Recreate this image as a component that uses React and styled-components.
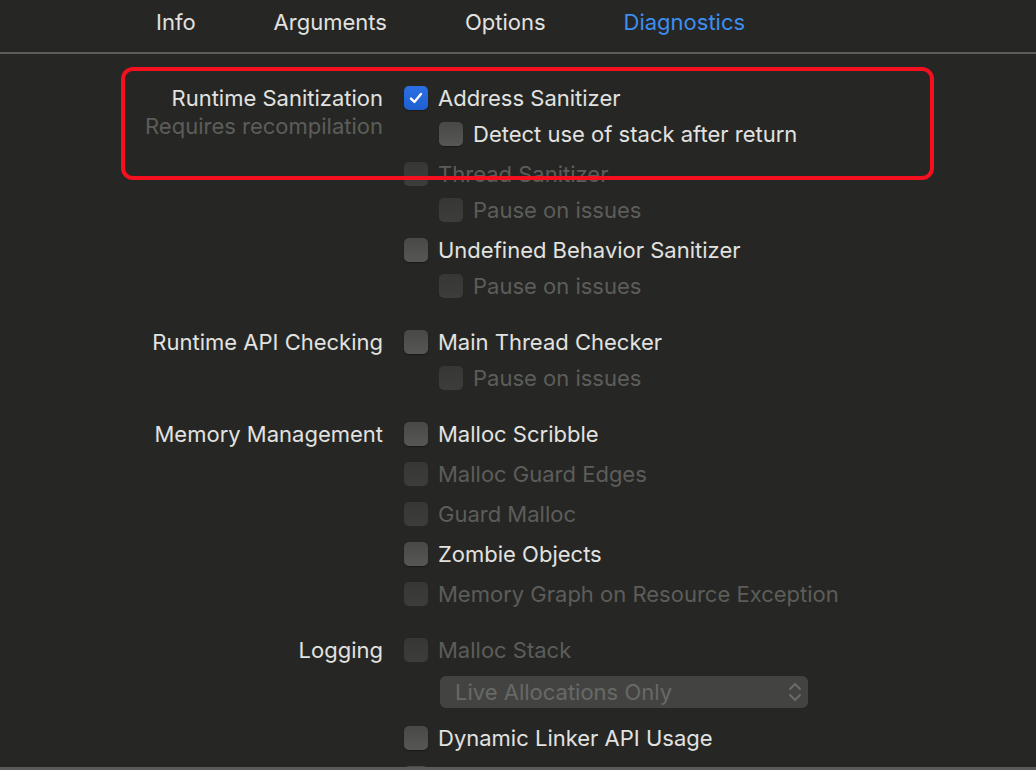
import styled, { createGlobalStyle } from "styled-components";

const GlobalStyle = createGlobalStyle`
  html, body {
    margin: 0;
    padding: 0;
    background: #262724;
  }
  body {
    font-family: Inter, "Noto Sans", "Liberation Sans", sans-serif;
    -webkit-font-smoothing: antialiased;
  }
`;

const tabs = ["Info", "Arguments", "Options", "Diagnostics"];

const sections = [
  {
    label: "Runtime Sanitization",
    caption: "Requires recompilation",
    items: [
      { text: "Address Sanitizer", checked: true },
      { text: "Detect use of stack after return", indent: true },
      { text: "Thread Sanitizer", disabled: true, spaced: true },
      { text: "Pause on issues", indent: true, disabled: true },
      { text: "Undefined Behavior Sanitizer", spaced: true },
      { text: "Pause on issues", indent: true, disabled: true },
    ],
  },
  {
    label: "Runtime API Checking",
    items: [
      { text: "Main Thread Checker" },
      { text: "Pause on issues", indent: true, disabled: true },
    ],
  },
  {
    label: "Memory Management",
    items: [
      { text: "Malloc Scribble" },
      { text: "Malloc Guard Edges", disabled: true, spaced: true },
      { text: "Guard Malloc", disabled: true, spaced: true },
      { text: "Zombie Objects", spaced: true },
      { text: "Memory Graph on Resource Exception", disabled: true, spaced: true },
    ],
  },
  {
    label: "Logging",
    items: [
      { text: "Malloc Stack", disabled: true },
      { popup: "Live Allocations Only" },
      { text: "Dynamic Linker API Usage" },
      // next row is cut off by the window edge, only its checkbox peeks in
      { text: "", spaced: true },
    ],
  },
];

const Checkbox = ({ checked, disabled }) => (
  <Box $checked={checked} $disabled={disabled}>
    {checked && (
      <svg width="16" height="16" viewBox="0 0 16 16">
        <path
          d="M3 8.6 L6.4 12 L13 4"
          fill="none"
          stroke="#fff"
          strokeWidth="2.4"
          strokeLinecap="round"
          strokeLinejoin="round"
        />
      </svg>
    )}
  </Box>
);

const App = () => {
  return (
    <>
      <GlobalStyle />
      <Window>
        <TabBar>
          {tabs.map((t) => (
            <Tab key={t} $active={t === "Diagnostics"}>
              {t}
            </Tab>
          ))}
        </TabBar>
        <Content>
          {sections.map((s) => (
            <Section key={s.label}>
              <LabelCol>
                <Label>{s.label}</Label>
                {s.caption && <Caption>{s.caption}</Caption>}
              </LabelCol>
              <Options>
                {s.items.map((item, i) =>
                  item.popup ? (
                    <Popup key={i}>
                      <span>{item.popup}</span>
                      <svg width="14" height="22" viewBox="0 0 14 22">
                        <path
                          d="M2 8 L7 3 L12 8 M2 14 L7 19 L12 14"
                          fill="none"
                          stroke="#6c6d6a"
                          strokeWidth="1.8"
                          strokeLinecap="round"
                          strokeLinejoin="round"
                        />
                      </svg>
                    </Popup>
                  ) : (
                    <Row key={i} $indent={item.indent} $spaced={item.spaced}>
                      <Checkbox checked={item.checked} disabled={item.disabled} />
                      {item.text && (
                        <RowText $disabled={item.disabled}>{item.text}</RowText>
                      )}
                    </Row>
                  )
                )}
              </Options>
            </Section>
          ))}
          <Highlight />
        </Content>
        <Footer />
      </Window>
    </>
  );
};

export default App;

const Window = styled.div`
  height: 770px;
  display: flex;
  flex-direction: column;
  background: #262724;
  overflow: hidden;
`;

const TabBar = styled.div`
  height: 54px;
  flex-shrink: 0;
  display: flex;
  align-items: flex-start;
  gap: 78px;
  padding: 8px 0 0 156px;
  box-sizing: border-box;
  border-bottom: 2px solid #5c5d5a;
`;

const Tab = styled.div`
  font-size: 22px;
  line-height: 28px;
  color: ${(p) => (p.$active ? "#3d8ef0" : "#e2e2e0")};
`;

const Content = styled.div`
  position: relative;
  flex: 1;
  overflow: hidden;
  padding-top: 26px;
  display: flex;
  flex-direction: column;
  gap: 20px;
`;

const Section = styled.div`
  display: flex;
  gap: 21px;
`;

const LabelCol = styled.div`
  width: 383px;
  flex-shrink: 0;
  text-align: right;
`;

const Label = styled.div`
  font-size: 22px;
  line-height: 36px;
  color: #e2e2e0;
`;

const Caption = styled.div`
  font-size: 22px;
  line-height: 20px;
  color: #5c5d5a;
`;

const Options = styled.div`
  display: flex;
  flex-direction: column;
`;

const Row = styled.div`
  height: 36px;
  display: flex;
  align-items: center;
  gap: 10px;
  margin-left: ${(p) => (p.$indent ? "35px" : "0")};
  margin-top: ${(p) => (p.$spaced ? "4px" : "0")};
`;

const Box = styled.div`
  width: 24px;
  height: 24px;
  box-sizing: border-box;
  border-radius: 5px;
  flex-shrink: 0;
  display: flex;
  align-items: center;
  justify-content: center;
  background: ${(p) =>
    p.$checked
      ? "linear-gradient(#2b70e4, #1f5fd0)"
      : p.$disabled
      ? "linear-gradient(#373836, #3d3e3c)"
      : "linear-gradient(#484947, #575856)"};
  box-shadow: ${(p) =>
    p.$disabled ? "none" : "0 1px 1px rgba(0, 0, 0, 0.35)"};
`;

const RowText = styled.span`
  font-size: 22px;
  color: ${(p) => (p.$disabled ? "#5c5d5a" : "#e2e2e0")};
  white-space: nowrap;
`;

const Popup = styled.div`
  width: 368px;
  height: 32px;
  box-sizing: border-box;
  margin: 8px 0 12px 36px;
  padding: 0 6px 0 15px;
  border-radius: 6px;
  background: #434442;
  display: flex;
  align-items: center;
  justify-content: space-between;
  font-size: 22px;
  color: #686966;
`;

const Highlight = styled.div`
  position: absolute;
  left: 121px;
  top: 13px;
  width: 813px;
  height: 113px;
  box-sizing: border-box;
  border: 4px solid #f5101f;
  border-radius: 12px;
  pointer-events: none;
`;

const Footer = styled.div`
  height: 3px;
  flex-shrink: 0;
  background: #5a5b58;
`;
